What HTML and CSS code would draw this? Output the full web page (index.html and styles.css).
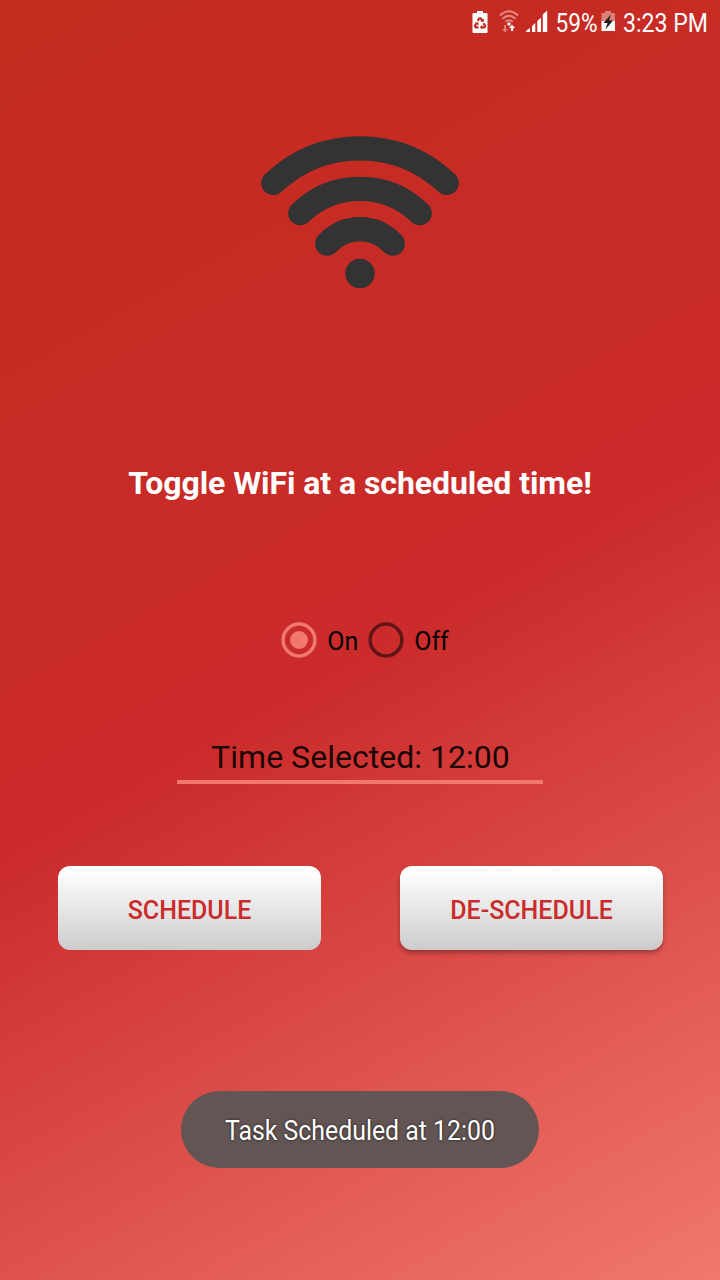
FILE: index.html
```html
<!DOCTYPE html>
<html lang="en">
<head>
<meta charset="utf-8">
<title>WiFi Scheduler</title>
<link rel="stylesheet" href="styles.css">
</head>
<body>
<div class="screen">
  <header class="status">
    <svg class="ic-battery" width="16" height="23" viewBox="0 0 16 23"><path fill="#fff" d="M5 0h6v2h3.500a1 1 0 0 1 1 1v18a1 1 0 0 1-1 1h-13a1 1 0 0 1-1-1V3a1 1 0 0 1 1-1H5z"/><path fill="none" stroke="#c32b20" stroke-width="2.200" d="M5.600 9.800 7.300 7.300h1.400l1.700 2.500M4.400 12.200l-1.500 2.800.7 1.300h2.900M11.600 12.200l1.500 2.800-.7 1.300H9.500"/><path fill="#c32b20" d="M8.400 10.800h3.600V7.600zM3 11.600l3.400-.3v3.200zM10.200 14v4.600l-2.500-2.300z"/></svg>
    <svg class="ic-wifi" width="20" height="23" viewBox="0 0 20 23"><g fill="none" stroke="#e48a83" stroke-width="2"><path d="M1 5.500Q10-3 19 5.500M3.500 8.800q6.500-6 13 0M6.300 11.800q3.700-3 7.400 0"/></g><circle cx="10" cy="14" r="1.700" fill="#fff"/><path fill="#e07d75" d="M5 15h2v4h2l-3 3.500L3 19h2z"/><path fill="#fff" d="M12 21h2.200v-3H16L13 14.700 10 18h2z"/></svg>
    <svg class="ic-signal" width="22" height="23" viewBox="0 0 22 23"><path fill="#fff" d="M0 22v-1L4 18v4zM6 22v-6l3.300-3v9zM11.300 22V11l3.700-3.200V22zM16.800 22V4.500L21.200.500V22z"/></svg>
    <svg class="pct" width="46" height="32"><text x="1.500" y="25" textLength="42" lengthAdjust="spacingAndGlyphs">59%</text></svg>
    <svg class="ic-charge" width="15" height="22" viewBox="0 0 15 22"><path fill="#dc817a" d="M4 0h6v2h4v9H.5V2H4z"/><path fill="#fff" d="M.5 10H14v10H.5z"/><path fill="#1c1c1c" d="M10 3.500 2.500 12h4L4.500 18.500 12 9.500H8z"/></svg>
    <svg class="clock" width="90" height="32"><text x="2" y="25" textLength="85" lengthAdjust="spacingAndGlyphs">3:23 PM</text></svg>
  </header>
  <svg class="wifi" width="200" height="156" viewBox="260 134 200 156">
    <g fill="none" stroke="#333" stroke-width="24.200" stroke-linecap="round"><path d="M273.300 183Q310 148.300 360 148.300T446.700 183"/><path d="M300.300 213.200Q325 188.800 360 188.800T419.700 213.200"/><path d="M327.200 243.700Q341 229.200 360 229.200T392.800 243.700"/></g>
    <circle cx="360" cy="273.500" r="14.700" fill="#333"/>
  </svg>
  <h1 class="title">Toggle WiFi at a scheduled time!</h1>
  <div class="radios">
    <svg class="radio on" width="36" height="36"><circle class="ring" cx="18" cy="18" r="15.900"/><circle class="dot" cx="18" cy="18" r="9"/></svg><span class="label first">On</span>
    <svg class="radio" width="36" height="36"><circle class="ring" cx="18" cy="18" r="15.900"/></svg><span class="label">Off</span>
  </div>
  <div class="time">Time Selected: 12:00</div>
  <div class="buttons">
    <button class="btn">SCHEDULE</button>
    <button class="btn raised">DE-SCHEDULE</button>
  </div>
  <div class="toast"><svg width="280" height="44"><text x="5" y="30" textLength="270" lengthAdjust="spacingAndGlyphs">Task Scheduled at 12:00</text></svg></div>
</div>
</body>
</html>
```
FILE: styles.css
```css
* { box-sizing: border-box; }
body { margin: 0; font-family: Roboto, sans-serif; }
svg { display: block; flex: none; overflow: visible; }
.screen {
  width: 720px; height: 1280px; overflow: hidden;
  display: flex; flex-direction: column; align-items: center;
  background: linear-gradient(150.640deg, #c32b1e 0%, #cb2b2b 51.500%, #f0786e 100%);
}
.status { width: 100%; height: 48px; padding: 7px 9px 0 0; display: flex; justify-content: flex-end; align-items: flex-start; }
.status text { font-size: 26px; fill: #fff; }
.ic-battery { margin: 4px 11px 0 0; }
.ic-wifi { margin: 3px 7px 0 0; }
.ic-signal { margin: 3px 6px 0 0; }
.pct { margin-right: 1px; }
.ic-charge { margin: 4px 5px 0 0; }
.wifi { margin-top: 86px; }
.title { margin: 173px 0 0; height: 40px; line-height: 40px; font-size: 32px; font-weight: 700; letter-spacing: -.07px; color: #fff; white-space: nowrap; }
.radios { margin: 117px 0 0 10px; height: 40px; display: flex; align-items: center; }
.ring { fill: none; stroke: #611517; stroke-width: 3.500px; }
.on .ring { stroke: #f0786e; }
.dot { fill: #f0786e; }
.label { font-size: 25px; line-height: 30px; padding-top: 3px; margin-left: 10px; color: #000; }
.first { margin-right: 10px; }
.time { margin-top: 77px; width: 366px; height: 47px; line-height: 40px; border-bottom: 4px solid #f0786e; text-align: center; font-size: 32px; letter-spacing: .03px; padding-left: 1px; color: #1b0606; }
.buttons { margin-top: 82px; display: flex; gap: 79px; }
.btn { width: 263px; height: 84px; padding: 4px 0 0 1px; border: 0; border-radius: 12px; background: linear-gradient(#fff 5%, #ccc); color: #cb2b2b; font: 500 25px Roboto, sans-serif; }
.raised { box-shadow: 0 3px 4px rgba(0,0,0,.3); }
.toast { margin-top: 141px; width: 358px; height: 77px; border-radius: 39px; background: #635553; display: flex; justify-content: center; padding-top: 19px; }
.toast text { font-size: 28px; fill: #fff; text-shadow: 0 0 3px rgba(0,0,0,.75); }
```
